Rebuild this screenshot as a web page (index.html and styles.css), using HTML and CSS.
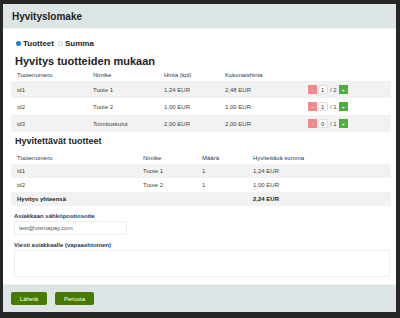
FILE: index.html
```html
<!DOCTYPE html>
<html lang="fi">

<head>
    <meta charset="UTF-8" />
    <meta name="viewport" content="width=device-width, initial-scale=1.0" />
    <title>Hyvityslomake</title>
    <link rel="stylesheet" href="styles.css">
</head>

<body>
    <div class="modal">
        <div class="modal-header">Hyvityslomake</div>

        <div class="modal-body">
            <div class="radios">
                <label><span class="radio checked"></span>Tuotteet</label>
                <label><span class="radio"></span>Summa</label>
            </div>

            <h2>Hyvitys tuotteiden mukaan</h2>
            <table class="products">
                <tr>
                    <th class="c1">Tuotenumero</th>
                    <th class="c2">Nimike</th>
                    <th class="c3">Hinta (kpl)</th>
                    <th class="c4">Kokonaishinta</th>
                    <th></th>
                </tr>
                <tr>
                    <td>id1</td>
                    <td>Tuote 1</td>
                    <td>1,24 EUR</td>
                    <td>2,48 EUR</td>
                    <td>
                        <div class="qty"><span class="btn-minus">-</span><span class="qty-input">1</span><span class="qty-max">/ 2</span><span class="btn-plus">+</span></div>
                    </td>
                </tr>
                <tr>
                    <td>id2</td>
                    <td>Tuote 2</td>
                    <td>1,00 EUR</td>
                    <td>1,00 EUR</td>
                    <td>
                        <div class="qty"><span class="btn-minus">-</span><span class="qty-input">1</span><span class="qty-max">/ 1</span><span class="btn-plus">+</span></div>
                    </td>
                </tr>
                <tr>
                    <td>id3</td>
                    <td>Toimituskulut</td>
                    <td>2,00 EUR</td>
                    <td>2,00 EUR</td>
                    <td>
                        <div class="qty"><span class="btn-minus">-</span><span class="qty-input">0</span><span class="qty-max">/ 1</span><span class="btn-plus">+</span></div>
                    </td>
                </tr>
            </table>

            <h3>Hyvitettävät tuotteet</h3>
            <table class="refunds">
                <tr>
                    <th class="d1">Tuotenumero</th>
                    <th class="d2">Nimike</th>
                    <th class="d3">Määrä</th>
                    <th>Hyvitettävä summa</th>
                </tr>
                <tr>
                    <td>id1</td>
                    <td>Tuote 1</td>
                    <td>1</td>
                    <td>1,24 EUR</td>
                </tr>
                <tr>
                    <td>id2</td>
                    <td>Tuote 2</td>
                    <td>1</td>
                    <td>1,00 EUR</td>
                </tr>
                <tr class="total">
                    <td>Hyvitys yhteensä</td>
                    <td></td>
                    <td></td>
                    <td>2,24 EUR</td>
                </tr>
            </table>

            <label class="field-label">Asiakkaan sähköpostiosoite</label>
            <div class="input">test@vismapay.com</div>
            <label class="field-label">Viesti asiakkaalle (vapaaehtoinen)</label>
            <div class="textarea"></div>
        </div>

        <div class="modal-footer">
            <button class="btn">Lähetä</button>
            <button class="btn">Peruuta</button>
        </div>
    </div>
</body>

</html>
```

FILE: styles.css
```css
* {
    box-sizing: border-box;
}

html,
body {
    margin: 0;
    padding: 0;
    height: 100vh;
    overflow: hidden;
    background: #262626;
    font-family: "Liberation Sans", Arial, sans-serif;
    color: #333333;
}

.modal {
    margin: 4px 0 0 3px;
    width: 393px;
    height: 308px;
    background: #ffffff;
    display: flex;
    flex-direction: column;
}

.modal-header {
    height: 25px;
    background: #dde5e6;
    border-bottom: 1px solid #eef2f2;
    padding: 0 9px;
    display: flex;
    align-items: center;
    font-size: 10px;
    font-weight: bold;
    color: #222222;
}

.modal-body {
    flex: 1;
    padding: 8px 8px 0 8px;
}

.radios {
    display: flex;
    gap: 4px;
    font-size: 8px;
    font-weight: bold;
    color: #222222;
    height: 12px;
    align-items: center;
    padding-left: 5px;
    margin-bottom: 5px;
}

.radios label {
    display: flex;
    align-items: center;
    gap: 2px;
}

.radio {
    width: 5px;
    height: 5px;
    border-radius: 50%;
    border: 1px solid #cccccc;
    background: #ffffff;
}

.radio.checked {
    border: none;
    background: #1e7be0;
}

h2 {
    margin: 0 0 1px 4px;
    font-size: 11px;
    color: #222222;
    line-height: 14px;
}

h3 {
    margin: 4px 0 5px 4px;
    font-size: 9px;
    color: #222222;
    line-height: 11px;
}

table {
    width: 380px;
    border-collapse: collapse;
    font-size: 6px;
    color: #444444;
}

th {
    text-align: left;
    font-weight: normal;
    color: #1d3a5a;
    height: 12px;
    padding: 0 0 0 6px;
}

td {
    padding: 0 0 0 6px;
}

.products td {
    height: 17px;
}

.products tr:nth-child(even) td {
    background: #f2f2f2;
}

.products .c1 {
    width: 76px;
}

.products .c2 {
    width: 71px;
}

.products .c3 {
    width: 61px;
}

.products .c4 {
    width: 83px;
}

.refunds td {
    height: 14px;
}

.refunds tr:nth-child(even) td {
    background: #f2f2f2;
}

.refunds .d1 {
    width: 126px;
}

.refunds .d2 {
    width: 59px;
}

.refunds .d3 {
    width: 51px;
}

.refunds .total td {
    font-weight: bold;
    color: #222222;
}

.qty {
    display: flex;
    align-items: center;
    gap: 1px;
    font-size: 6px;
}

.btn-minus,
.btn-plus {
    width: 9px;
    height: 9px;
    display: flex;
    align-items: center;
    justify-content: center;
    color: #ffffff;
    font-size: 6px;
}

.btn-minus {
    background: #f08a8a;
}

.btn-plus {
    background: #4cae3c;
}

.qty-input {
    width: 10px;
    height: 9px;
    border: 1px solid #dddddd;
    border-radius: 2px;
    background: #ffffff;
    display: flex;
    align-items: center;
    padding-left: 2px;
    color: #333333;
}

.qty-max {
    margin: 0 1px;
}

.field-label {
    display: block;
    font-size: 6px;
    font-weight: bold;
    color: #1d3a5a;
    margin: 7px 0 2px 3px;
}

.input {
    margin-left: 3px;
    width: 113px;
    height: 14px;
    border: 1px solid #eeeeee;
    font-size: 6px;
    color: #555555;
    display: flex;
    align-items: center;
    padding-left: 4px;
}

.textarea {
    margin-left: 3px;
    width: 376px;
    height: 27px;
    border: 1px solid #eeeeee;
}

.modal-footer {
    height: 28px;
    background: #dde5e6;
    border-top: 1px solid #eef2f2;
    display: flex;
    align-items: center;
    gap: 8px;
    padding: 0 8px 0 8px;
}

.btn {
    height: 13px;
    padding: 0;
    border: none;
    border-radius: 2px;
    background: #457c00;
    color: #ffffff;
    font-family: "Liberation Sans", Arial, sans-serif;
    font-size: 6px;
    width: 36px;
}

.btn + .btn {
    width: 39px;
}
```
